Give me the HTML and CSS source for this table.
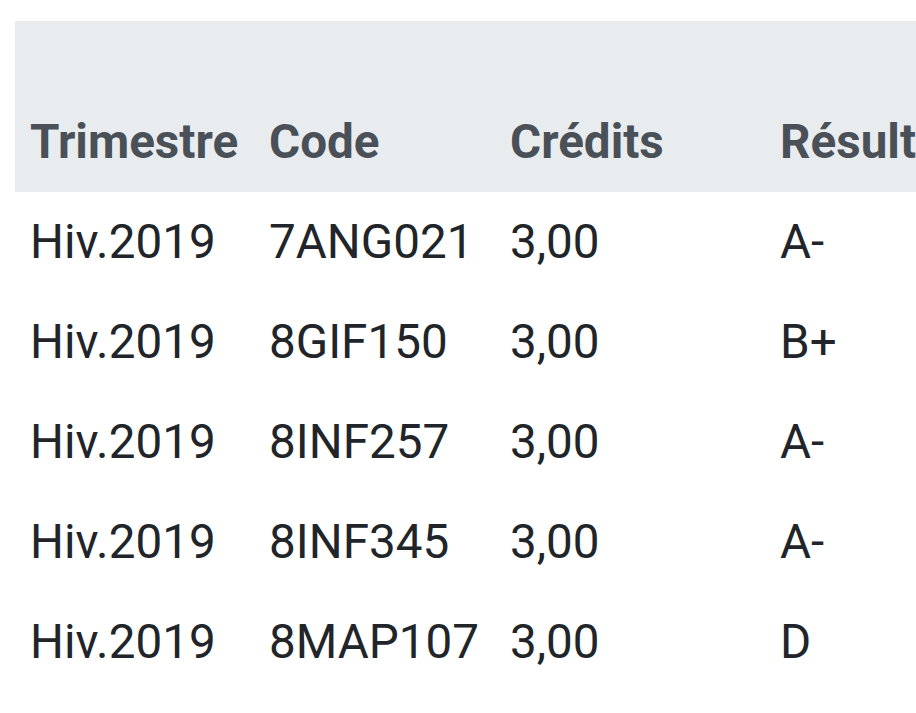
FILE: index.html
```html
<!DOCTYPE html>
<html lang="fr">
<head>
<meta charset="utf-8">
<title>Résultats</title>
<link rel="stylesheet" href="styles.css">
</head>
<body>
<div class="wrap">
  <table class="grades">
    <colgroup>
      <col class="c-term">
      <col class="c-code">
      <col class="c-cred">
      <col class="c-res">
    </colgroup>
    <thead>
      <tr>
        <th>Trimestre</th>
        <th>Code</th>
        <th>Crédits</th>
        <th>Résultat</th>
      </tr>
    </thead>
    <tbody>
      <tr><td>Hiv.2019</td><td>7ANG021</td><td>3,00</td><td>A-</td></tr>
      <tr><td>Hiv.2019</td><td>8GIF150</td><td>3,00</td><td>B+</td></tr>
      <tr><td>Hiv.2019</td><td>8INF257</td><td>3,00</td><td>A-</td></tr>
      <tr><td>Hiv.2019</td><td>8INF345</td><td>3,00</td><td>A-</td></tr>
      <tr><td>Hiv.2019</td><td>8MAP107</td><td>3,00</td><td>D</td></tr>
    </tbody>
  </table>
</div>
</body>
</html>
```
FILE: styles.css
```css
html, body {
  margin: 0;
  padding: 0;
  background: #ffffff;
  overflow: hidden;
}

.wrap {
  padding: 21px 0 0 15px;
  overflow: hidden;
}

.grades {
  border-collapse: collapse;
  table-layout: fixed;
  width: 1100px;
  font-family: Roboto, "Noto Sans", sans-serif;
  font-size: 47.6px;
  line-height: 72px;
  color: #212529;
}

.c-term { width: 239px; }
.c-code { width: 241px; }
.c-cred { width: 270px; }
.c-res { width: 350px; }

.grades th,
.grades td {
  text-align: left;
  white-space: nowrap;
  padding: 14px 15px;
}

.grades thead th {
  background: #e9ecef;
  color: #495057;
  font-weight: 700;
  height: 143px;
  padding-bottom: 14px;
  vertical-align: bottom;
}

.grades tbody td {
  font-weight: 400;
  vertical-align: top;
}
```
